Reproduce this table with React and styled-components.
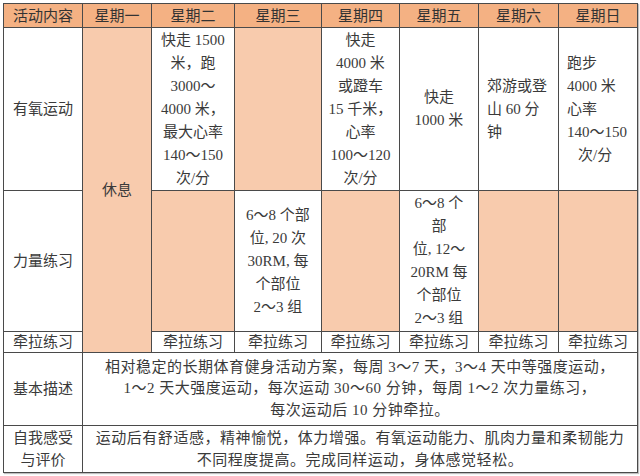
import React from 'react';
import styled, { createGlobalStyle } from 'styled-components';

const GlobalStyle = createGlobalStyle`
  html, body {
    margin: 0;
    padding: 0;
    background: #ffffff;
  }
  body {
    font-family: "Liberation Serif", "Noto Sans CJK SC", serif;
    color: #3a3a3a;
  }
`;

const Wrap = styled.div`
  width: 640px;
  height: 476px;
  padding: 3px 0 0 3px;
  box-sizing: border-box;
  overflow: hidden;
`;

const Sheet = styled.table`
  width: 634px;
  table-layout: fixed;
  border-collapse: collapse;
  font-size: 15px;
  box-shadow: 1px 1px 1px rgba(0, 0, 0, 0.25);
`;

const Row = styled.tr`
  height: ${(p) => p.$h}px;
`;

const HeadCell = styled.th`
  background: #f4b183;
  border: 1px solid #4a4a4a;
  font-weight: normal;
  text-align: center;
  padding: 0;
  line-height: 20px;
  color: #333333;
`;

const Cell = styled.td`
  background: ${(p) => (p.$tone === 'peach' ? '#f8cbad' : '#ffffff')};
  border: 1px solid #4a4a4a;
  text-align: ${(p) => p.$align || 'center'};
  vertical-align: middle;
  padding: ${(p) => (p.$align === 'left' ? '0 2px 0 8px' : '0 3px')};
  line-height: ${(p) => p.$lh || 23}px;
  letter-spacing: ${(p) => p.$ls || 0}px;
  white-space: nowrap;
  overflow: hidden;
`;

const Indent = styled.span`
  display: inline-block;
  padding-left: ${(p) => p.$w}px;
`;

const widths = [79, 69, 83, 87, 78, 79, 80, 79];
const days = ['星期一', '星期二', '星期三', '星期四', '星期五', '星期六', '星期日'];

const lines = (arr) =>
  arr.map((t, i) => (
    <React.Fragment key={i}>
      {i > 0 && <br />}
      {t}
    </React.Fragment>
  ));

export default function App() {
  return (
    <>
      <GlobalStyle />
      <Wrap>
        <Sheet>
          <colgroup>
            {widths.map((w, i) => (
              <col key={i} style={{ width: w }} />
            ))}
          </colgroup>
          <tbody>
            <Row $h={24}>
              <HeadCell>活动内容</HeadCell>
              {days.map((d) => (
                <HeadCell key={d}>{d}</HeadCell>
              ))}
            </Row>
            <Row $h={163}>
              <Cell>有氧运动</Cell>
              <Cell $tone="peach" rowSpan={3}>
                休息
              </Cell>
              <Cell>
                {lines(['快走 1500', '米，跑', '3000～', '4000 米，', '最大心率', '140～150', '次/分'])}
              </Cell>
              <Cell $tone="peach" />
              <Cell>
                {lines(['快走', '4000 米', '或蹬车', '15 千米，', '心率', '100～120', '次/分'])}
              </Cell>
              <Cell>{lines(['快走', '1000 米'])}</Cell>
              <Cell $align="left">{lines(['郊游或登', '山 60 分', '钟'])}</Cell>
              <Cell $align="left">
                {lines(['跑步', '4000 米', '心率', '140～150'])}
                <br />
                <Indent $w={11}>次/分</Indent>
              </Cell>
            </Row>
            <Row $h={141}>
              <Cell>力量练习</Cell>
              <Cell $tone="peach" />
              <Cell>{lines(['6～8 个部', '位, 20 次', '30RM, 每', '个部位', '2～3 组'])}</Cell>
              <Cell $tone="peach" />
              <Cell>
                {lines(['6～8 个', '部', '位, 12～', '20RM 每', '个部位', '2～3 组'])}
              </Cell>
              <Cell $tone="peach" />
              <Cell $tone="peach" />
            </Row>
            <Row $h={21}>
              <Cell $lh={20}>牵拉练习</Cell>
              {[0, 1, 2, 3, 4, 5].map((i) => (
                <Cell key={i} $lh={20}>
                  牵拉练习
                </Cell>
              ))}
            </Row>
            <Row $h={73}>
              <Cell $lh={21}>基本描述</Cell>
              <Cell colSpan={7} $lh={21.5} $ls={0.5}>
                {lines([
                  '相对稳定的长期体育健身活动方案，每周 3～7 天，3～4 天中等强度运动，',
                  '1～2 天大强度运动，每次运动 30～60 分钟，每周 1～2 次力量练习，',
                  '每次运动后 10 分钟牵拉。',
                ])}
              </Cell>
            </Row>
            <Row $h={47}>
              <Cell $lh={22}>{lines(['自我感受', '与评价'])}</Cell>
              <Cell colSpan={7} $lh={22} $ls={0.55}>
                {lines([
                  '运动后有舒适感，精神愉悦，体力增强。有氧运动能力、肌肉力量和柔韧能力',
                  '不同程度提高。完成同样运动，身体感觉轻松。',
                ])}
              </Cell>
            </Row>
          </tbody>
        </Sheet>
      </Wrap>
    </>
  );
}
